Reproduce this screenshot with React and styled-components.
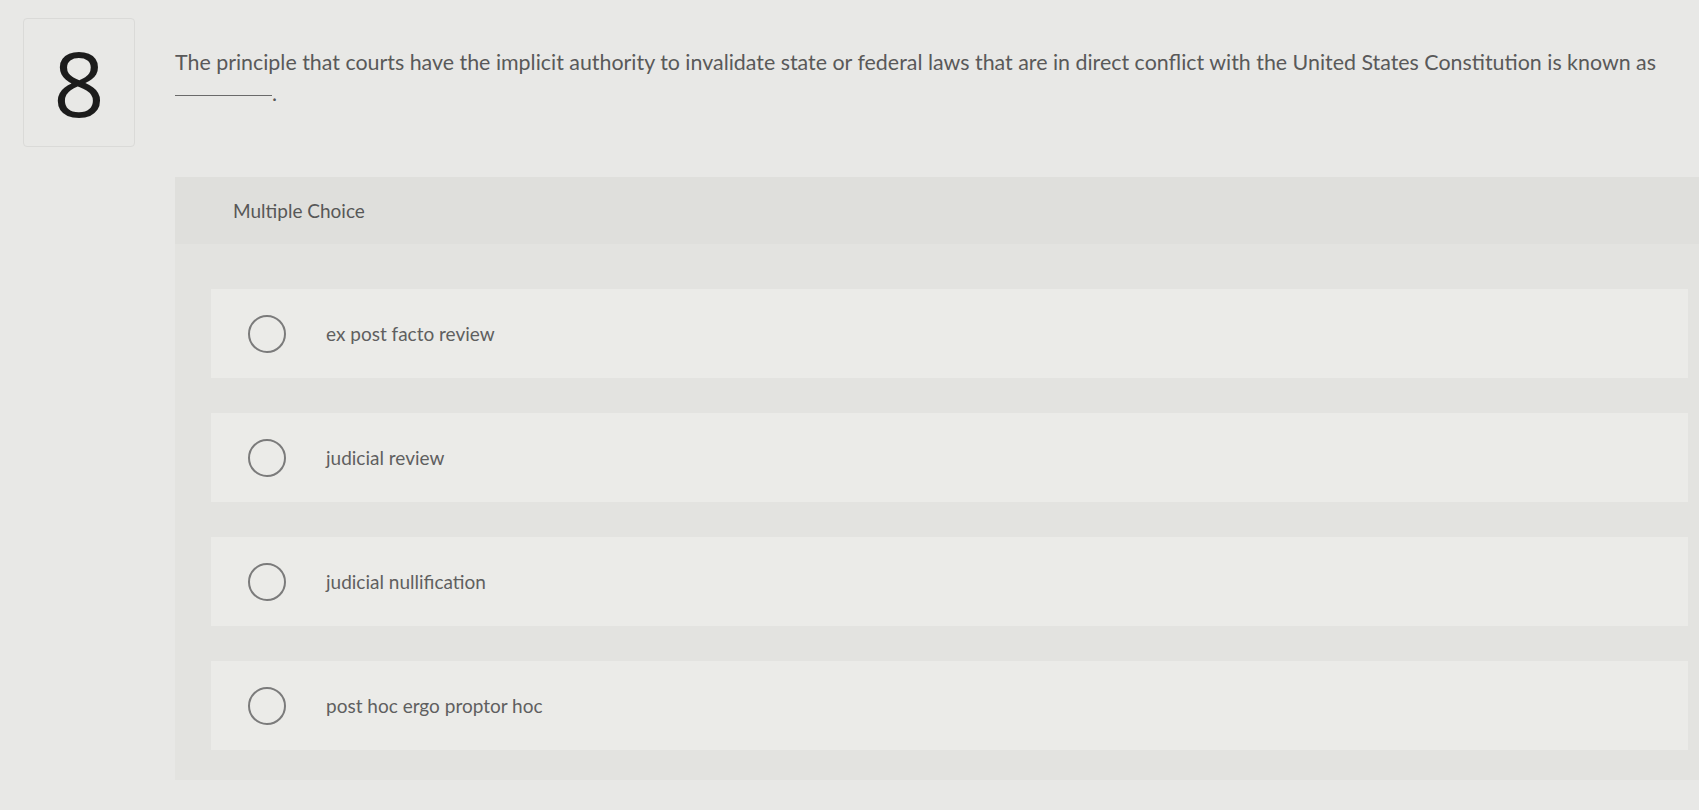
import React from "react";
import styled, { createGlobalStyle } from "styled-components";

const GlobalStyle = createGlobalStyle`
  html, body {
    margin: 0;
    padding: 0;
    background: #e8e8e6;
  }
  body {
    font-family: Lato, "Liberation Sans", Arial, sans-serif;
    overflow: hidden;
  }
`;

const choices = [
  "ex post facto review",
  "judicial review",
  "judicial nullification",
  "post hoc ergo proptor hoc",
];

const App = () => {
  return (
    <>
      <GlobalStyle />
      <Page>
        <NumberBox>8</NumberBox>
        <Body>
          <Prompt>
            The principle that courts have the implicit authority to invalidate state or federal laws that are in
            direct conflict with the United States Constitution is known as <Blank />.
          </Prompt>
          <Panel>
            <PanelHeader>Multiple Choice</PanelHeader>
            <Choices>
              {choices.map((c) => (
                <Choice key={c}>
                  <Radio />
                  <ChoiceLabel>{c}</ChoiceLabel>
                </Choice>
              ))}
            </Choices>
          </Panel>
        </Body>
      </Page>
    </>
  );
};

export default App;

const Page = styled.div`
  display: flex;
  align-items: flex-start;
  padding: 18px 0 0 23px;
  height: 810px;
  box-sizing: border-box;
`;

const NumberBox = styled.div`
  flex: 0 0 auto;
  width: 112px;
  height: 129px;
  box-sizing: border-box;
  border: 1px solid #dadad8;
  border-radius: 4px;
  display: flex;
  align-items: center;
  justify-content: center;
  font-family: "Open Sans", "Liberation Sans", sans-serif;
  font-weight: 400;
  font-size: 90px;
  color: #1c1c1c;
  padding-bottom: 2px;
`;

const Body = styled.div`
  flex: 1;
  display: flex;
  flex-direction: column;
  margin-left: 40px;
  padding-top: 29px;
`;

const Prompt = styled.p`
  margin: 0 22px 0 0;
  font-size: 21.4px;
  line-height: 31px;
  color: #595959;
`;

const Blank = styled.span`
  display: inline-block;
  width: 97px;
  height: 1px;
  background: #6a6a6a;
  vertical-align: 5px;
`;

const Panel = styled.section`
  margin-top: 68px;
  background: #e3e3e0;
  padding-bottom: 30px;
`;

const PanelHeader = styled.div`
  height: 67px;
  display: flex;
  align-items: center;
  padding-left: 58px;
  background: #dfdfdc;
  font-size: 19px;
  color: #575757;
`;

const Choices = styled.div`
  display: flex;
  flex-direction: column;
  gap: 35px;
  padding: 45px 11px 0 36px;
`;

const Choice = styled.label`
  display: flex;
  align-items: center;
  height: 89px;
  padding-left: 37px;
  background: #ebebe8;
  cursor: pointer;
`;

const Radio = styled.span`
  width: 38px;
  height: 38px;
  box-sizing: border-box;
  border: 2px solid #7b7b7b;
  border-radius: 50%;
  flex: 0 0 auto;
`;

const ChoiceLabel = styled.span`
  margin-left: 40px;
  font-size: 19px;
  color: #5f5f5f;
`;
